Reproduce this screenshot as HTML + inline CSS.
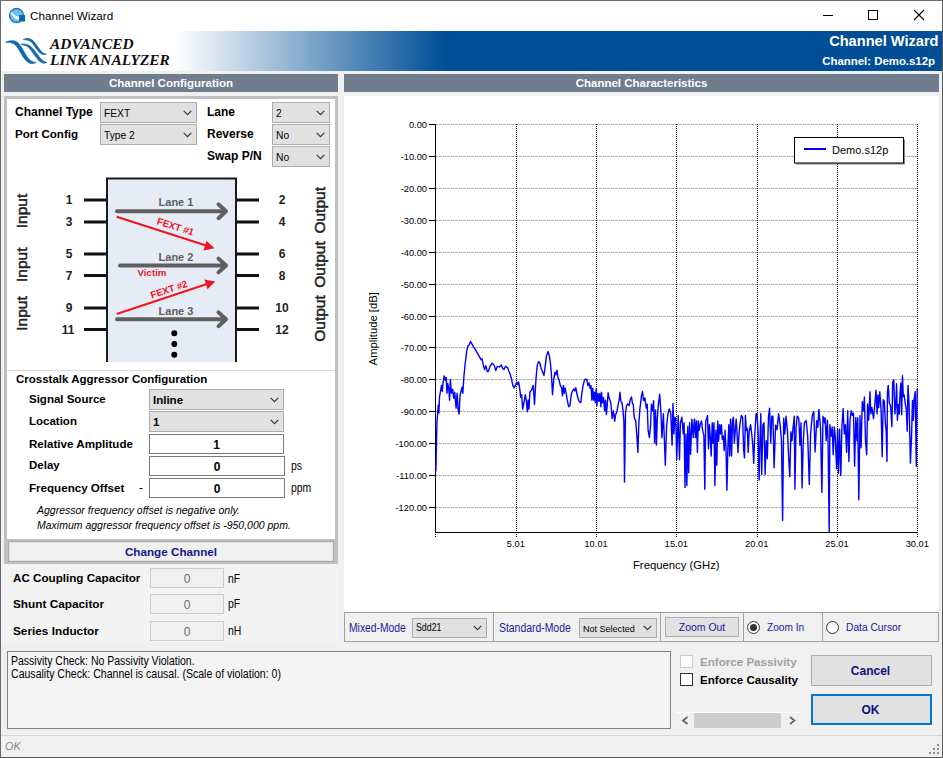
<!DOCTYPE html>
<html><head><meta charset="utf-8">
<style>
*{margin:0;padding:0;box-sizing:border-box}
html,body{width:943px;height:758px;overflow:hidden;background:#f0f0f0;font-family:"Liberation Sans",sans-serif;color:#000}
.a{position:absolute}
.t{position:absolute;white-space:nowrap;line-height:1}
.b{font-weight:bold}
.dd{position:absolute;background:#e1e1e1;border:1px solid #adadad}
.dd .v{position:absolute;left:3px;white-space:nowrap;line-height:1}
.chev2{position:absolute}
.tb{position:absolute;background:#fff;border:1px solid #7a7a7a}
.dis{position:absolute;background:#f0f0f0;border:1px solid #ccc}
.bar{position:absolute;background:#6f7d8c;color:#fff;font-weight:bold;font-size:11.5px;text-align:center;line-height:18px}
</style></head><body>
<!-- window frame -->
<div class="a" style="left:0;top:0;width:943px;height:758px;background:#f0f0f0"></div>
<!-- title bar -->
<div class="a" style="left:0;top:0;width:943px;height:31px;background:#fff"></div>
<div class="a" style="left:0;top:0;width:943px;height:1px;background:#6e6e6e"></div>
<svg class="a" style="left:8px;top:6.8px" width="18" height="18" viewBox="0 0 18 18">
<circle cx="8.5" cy="8.5" r="7" fill="#6cbbe8" stroke="#1a78c2" stroke-width="1.3"/>
<path d="M2.3 4.8 Q4 9 6 10.8 Q8 12.6 11 13 L11 9.6 Q7 9.2 4.5 6.3 Z" fill="#fff"/>
<rect x="11" y="8" width="6" height="6.5" fill="#0a6ab5"/>
</svg>
<div class="t" style="left:30px;top:10px;font-size:11.7px">Channel Wizard</div>
<div class="a" style="left:823px;top:15px;width:10px;height:1px;background:#000"></div>
<div class="a" style="left:868px;top:10px;width:10px;height:10px;border:1px solid #000"></div>
<svg class="a" style="left:913px;top:9px" width="12" height="12" viewBox="0 0 12 12"><path d="M1 1L11 11M11 1L1 11" stroke="#000" stroke-width="1.1"/></svg>

<!-- header banner -->
<div class="a" style="left:1px;top:31px;width:941px;height:40px;background:linear-gradient(to right,#fff 0px,#fff 175px,#004f96 443px,#004f96 941px)"></div>
<svg class="a" style="left:4px;top:36px" width="46" height="30" viewBox="0 0 46 30"><g fill="#1268ae" stroke="#1268ae" stroke-width="0.7" stroke-linejoin="round">
<polygon points="1.56,6.36 4.62,5.09 8.18,4.68 11.23,5.09 13.78,6.62 15.81,8.91 17.85,11.96 19.88,15.52 21.92,19.08 23.95,21.88 26.50,24.43 29.55,26.21 32.10,26.46 29.55,27.48 26.50,27.48 23.45,25.95 20.90,23.41 18.36,19.85 16.32,16.28 14.28,12.72 12.25,9.67 9.70,7.63 6.65,6.62 3.60,6.36"/><polygon points="16.83,8.40 19.88,7.89 22.94,8.40 25.99,9.92 28.53,12.21 31.08,15.27 33.62,18.83 36.17,21.88 38.71,24.43 41.26,25.95 42.78,26.46 40.24,27.23 37.69,26.72 34.64,24.43 32.10,21.37 29.55,17.81 27.01,14.25 24.46,11.20 21.92,9.67 19.37,8.91"/><polygon points="19.37,3.56 22.43,2.29 25.99,2.80 29.04,4.58 31.59,7.63 34.13,11.20 36.68,14.76 39.22,17.05 42.27,18.32 38.71,18.58 35.66,16.79 33.11,13.74 30.57,10.18 28.03,6.62 24.97,4.58 21.92,3.82"/></g></svg>
<div class="t" style="left:50px;top:36px;font-family:'Liberation Serif',serif;font-weight:bold;font-style:italic;font-size:15.4px;color:#111">ADVANCED</div>
<div class="t" style="left:50px;top:51.5px;font-family:'Liberation Serif',serif;font-weight:bold;font-style:italic;font-size:15.4px;color:#111">LINK ANALYZER</div>
<div class="t b" style="right:4.5px;top:33.8px;font-size:14.6px;color:#fff">Channel Wizard</div>
<div class="t b" style="right:8px;top:55.5px;font-size:11.4px;color:#fff">Channel: Demo.s12p</div>

<!-- section bars -->
<div class="bar" style="left:4px;top:74px;width:334px;height:18px">Channel Configuration</div>
<div class="bar" style="left:344px;top:74px;width:595px;height:18px">Channel Characteristics</div>

<!-- left frame -->
<div class="a" style="left:4px;top:96px;width:334px;height:468px;background:#c0c0c0"></div>
<div class="a" style="left:7px;top:99px;width:328px;height:440px;background:#fff"></div>


<!-- top combos -->
<div class="t b" style="left:15px;top:106px;font-size:12px">Channel Type</div>
<div class="t b" style="left:15px;top:128.3px;font-size:11.6px">Port Config</div>
<div class="t b" style="left:207px;top:106px;font-size:12px">Lane</div>
<div class="t b" style="left:207px;top:128px;font-size:12px">Reverse</div>
<div class="t b" style="left:207px;top:150px;font-size:12px">Swap P/N</div>
<div class="dd" style="left:100px;top:102px;width:97px;height:21px"><span class="v" style="top:4.8px;font-size:11.5px;transform:scaleX(0.89);transform-origin:0 0;">FEXT</span><svg class="chev2" style="right:4px;top:7px" width="9" height="6" viewBox="0 0 9 6"><path d="M0.7 0.8L4.5 4.6L8.3 0.8" stroke="#333" stroke-width="1.15" fill="none"/></svg></div>
<div class="dd" style="left:100px;top:124px;width:97px;height:21px"><span class="v" style="top:4.8px;font-size:11.5px;transform:scaleX(0.89);transform-origin:0 0;">Type 2</span><svg class="chev2" style="right:4px;top:7px" width="9" height="6" viewBox="0 0 9 6"><path d="M0.7 0.8L4.5 4.6L8.3 0.8" stroke="#333" stroke-width="1.15" fill="none"/></svg></div>
<div class="dd" style="left:272px;top:102px;width:58px;height:21px"><span class="v" style="top:4.8px;font-size:11.5px;transform:scaleX(0.89);transform-origin:0 0;">2</span><svg class="chev2" style="right:4px;top:7px" width="9" height="6" viewBox="0 0 9 6"><path d="M0.7 0.8L4.5 4.6L8.3 0.8" stroke="#333" stroke-width="1.15" fill="none"/></svg></div>
<div class="dd" style="left:272px;top:124px;width:58px;height:21px"><span class="v" style="top:4.8px;font-size:11.5px;transform:scaleX(0.89);transform-origin:0 0;">No</span><svg class="chev2" style="right:4px;top:7px" width="9" height="6" viewBox="0 0 9 6"><path d="M0.7 0.8L4.5 4.6L8.3 0.8" stroke="#333" stroke-width="1.15" fill="none"/></svg></div>
<div class="dd" style="left:272px;top:146px;width:58px;height:21px"><span class="v" style="top:4.8px;font-size:11.5px;transform:scaleX(0.89);transform-origin:0 0;">No</span><svg class="chev2" style="right:4px;top:7px" width="9" height="6" viewBox="0 0 9 6"><path d="M0.7 0.8L4.5 4.6L8.3 0.8" stroke="#333" stroke-width="1.15" fill="none"/></svg></div>

<!-- diagram -->
<svg class="a" style="left:7px;top:99px" width="328" height="440" viewBox="7 99 328 440">
<rect x="107" y="178.5" width="129" height="190" fill="#e6ecf6" stroke="#1a1a1a" stroke-width="2"/>
<rect x="100" y="362" width="150" height="20" fill="#fff"/>
<g stroke="#111" stroke-width="3">
<path d="M84 200H106M84 222H106M84 254H106M84 275.5H106M84 308H106M84 329.5H106"/>
<path d="M237 200H259M237 222H259M237 254H259M237 275.5H259M237 308H259M237 329.5H259"/>
</g>
<g fill="#222" font-family="Liberation Sans" font-weight="bold" font-size="12" text-anchor="middle">
<text x="69" y="204">1</text><text x="69" y="226">3</text><text x="69" y="258">5</text><text x="69" y="279.5">7</text><text x="69" y="312">9</text><text x="68" y="333.5">11</text>
<text x="282" y="204">2</text><text x="282" y="226">4</text><text x="282" y="258">6</text><text x="282" y="279.5">8</text><text x="282" y="312">10</text><text x="282" y="333.5">12</text>
</g>
<g fill="#222" stroke="#222" stroke-width="0.5" font-family="Liberation Sans" font-size="15.5" text-anchor="middle">
<text transform="translate(27,211) rotate(-90)">Input</text>
<text transform="translate(27,264.7) rotate(-90)">Input</text>
<text transform="translate(27,313.5) rotate(-90)">Input</text>
<text transform="translate(325,210.3) rotate(-90)">Output</text>
<text transform="translate(325,264.5) rotate(-90)">Output</text>
<text transform="translate(325,318.5) rotate(-90)">Output</text>
</g>
<g stroke="#5f5f5f" stroke-width="4" stroke-linecap="round" stroke-linejoin="round" fill="none">
<path d="M117 211.3H226M218.5 204.4L226 211.3L218.5 218.2"/>
<path d="M120 265.5H226M218.5 258.6L226 265.5L218.5 272.4"/>
<path d="M117 319.3H226M218.5 312.4L226 319.3L218.5 326.2"/>
</g>
<g fill="#5f5f5f" font-family="Liberation Sans" font-weight="bold" font-size="11" text-anchor="middle">
<text x="176" y="206">Lane 1</text><text x="176" y="261">Lane 2</text><text x="176" y="315">Lane 3</text>
</g>
<g stroke="#f0141e" stroke-width="2" fill="none">
<path d="M116.7 216.7L206 245.5"/>
<path d="M116.7 314L207 284"/>
</g>
<path d="M214.5 248.2L203.5 250.5L206.5 240.8Z" fill="#f0141e"/>
<path d="M215.3 281.5L207.5 289.2L204.5 279.5Z" fill="#f0141e"/>
<g fill="#f0141e" font-family="Liberation Sans" font-weight="bold" font-size="9.7" text-anchor="middle">
<text transform="translate(174.5,229.8) rotate(18)">FEXT #1</text>
<text transform="translate(170,292.6) rotate(-18)">FEXT #2</text>
<text x="152" y="276">Victim</text>
</g>
<g fill="#000"><circle cx="174.3" cy="333.2" r="3"/><circle cx="174.3" cy="344" r="3"/><circle cx="174.3" cy="354.8" r="3"/></g>
</svg>
<div class="a" style="left:7px;top:370px;width:328px;height:1px;background:#dadada"></div>

<!-- crosstalk -->
<div class="t b" style="left:16px;top:374px;font-size:11.5px">Crosstalk Aggressor Configuration</div>
<div class="t b" style="left:29px;top:394px;font-size:11.5px">Signal Source</div>
<div class="t b" style="left:29px;top:416px;font-size:11.5px">Location</div>
<div class="t b" style="left:29px;top:437.8px;font-size:11.6px">Relative Amplitude</div>
<div class="t b" style="left:29px;top:460px;font-size:11.5px">Delay</div>
<div class="t b" style="left:29px;top:481.6px;font-size:11.6px">Frequency Offset</div>
<div class="t" style="left:139px;top:482px;font-size:12px">-</div>
<div class="dd" style="left:149px;top:389px;width:135px;height:21px"><span class="v b" style="top:5px;font-size:11.5px">Inline</span><svg class="chev2" style="right:4px;top:7px" width="9" height="6" viewBox="0 0 9 6"><path d="M0.7 0.8L4.5 4.6L8.3 0.8" stroke="#333" stroke-width="1.15" fill="none"/></svg></div>
<div class="dd" style="left:149px;top:411px;width:135px;height:21px"><span class="v b" style="top:5px;font-size:11.5px">1</span><svg class="chev2" style="right:4px;top:7px" width="9" height="6" viewBox="0 0 9 6"><path d="M0.7 0.8L4.5 4.6L8.3 0.8" stroke="#333" stroke-width="1.15" fill="none"/></svg></div>
<div class="tb" style="left:149px;top:434px;width:135px;height:20px"><span class="t b" style="left:0;width:133px;text-align:center;top:4px;font-size:12px">1</span></div>
<div class="tb" style="left:149px;top:456px;width:136px;height:20px"><span class="t b" style="left:0;width:134px;text-align:center;top:4px;font-size:12px">0</span></div>
<div class="tb" style="left:149px;top:478px;width:136px;height:20px"><span class="t b" style="left:0;width:134px;text-align:center;top:4px;font-size:12px">0</span></div>
<div class="t" style="left:291px;top:460px;font-size:12px;transform:scaleX(0.87);transform-origin:0 0;">ps</div>
<div class="t" style="left:291px;top:482px;font-size:12px;transform:scaleX(0.87);transform-origin:0 0;">ppm</div>
<div class="t" style="left:37px;top:505px;font-size:10.5px;font-style:italic">Aggressor frequency offset is negative only.</div>
<div class="t" style="left:37px;top:520px;font-size:10.5px;font-style:italic">Maximum aggressor frequency offset is -950,000 ppm.</div>

<!-- change channel -->
<div class="a" style="left:8px;top:541px;width:326px;height:21px;background:#f0f0f0;border:1px solid #a8a8a8;box-shadow:inset 0 0 0 1px #e3e3e3"></div>
<div class="t" style="left:8px;width:326px;text-align:center;top:545.5px;font-size:11.7px;color:#1a1a8c;font-weight:bold">Change Channel</div>

<!-- passive components -->
<div class="a" style="left:1px;top:564px;width:337px;height:78px;background:#f3f3f3"></div>
<div class="t b" style="left:13px;top:571.6px;font-size:11.65px">AC Coupling Capacitor</div>
<div class="t b" style="left:13px;top:599px;font-size:11.8px">Shunt Capacitor</div>
<div class="t b" style="left:13px;top:626px;font-size:11.8px">Series Inductor</div>
<div class="dis" style="left:150px;top:568px;width:74px;height:20px"><span class="t" style="left:0;width:72px;text-align:center;top:4px;font-size:12px;color:#6d6d6d">0</span></div>
<div class="dis" style="left:150px;top:594px;width:74px;height:20px"><span class="t" style="left:0;width:72px;text-align:center;top:4px;font-size:12px;color:#6d6d6d">0</span></div>
<div class="dis" style="left:150px;top:621px;width:74px;height:20px"><span class="t" style="left:0;width:72px;text-align:center;top:4px;font-size:12px;color:#6d6d6d">0</span></div>
<div class="t" style="left:228px;top:572.5px;font-size:12px;transform:scaleX(0.87);transform-origin:0 0;">nF</div>
<div class="t" style="left:228px;top:598px;font-size:12px;transform:scaleX(0.87);transform-origin:0 0;">pF</div>
<div class="t" style="left:228px;top:625px;font-size:12px;transform:scaleX(0.87);transform-origin:0 0;">nH</div>

<!-- right chart area -->
<div class="a" style="left:344px;top:96px;width:595px;height:516px;background:#fff"></div>
<svg class="a" style="left:344px;top:96px" width="595" height="516" viewBox="344 96 595 516">
<path d="M435 124.5H918 M435 156.5H918 M435 188.5H918 M435 220.5H918 M435 252.5H918 M435 284.5H918 M435 316.5H918 M435 347.5H918 M435 379.5H918 M435 411.5H918 M435 443.5H918 M435 475.5H918 M435 507.5H918" stroke="#a9a9a9" stroke-width="1" stroke-dasharray="3 1" fill="none"/>
<path d="M516.5 124V537 M596.5 124V537 M676.5 124V537 M757.5 124V537 M837.5 124V537 M917.5 124V537" stroke="#000" stroke-width="1" stroke-dasharray="1 1" fill="none"/>
<path d="M435.5 537V533" stroke="#000" stroke-width="1" stroke-dasharray="1 1" fill="none"/>
<path d="M435.5 124V533M435 532.5H918" stroke="#000" stroke-width="1" fill="none"/>
<path d="M429 124.5H435 M429 156.5H435 M429 188.5H435 M429 220.5H435 M429 252.5H435 M429 284.5H435 M429 316.5H435 M429 347.5H435 M429 379.5H435 M429 411.5H435 M429 443.5H435 M429 475.5H435 M429 507.5H435" stroke="#000" stroke-width="1" fill="none"/>
<g font-family="Liberation Sans" font-size="9.3" text-anchor="end" fill="#000"><text x="427" y="127.5">0.00</text><text x="427" y="159.5">-10.00</text><text x="427" y="191.5">-20.00</text><text x="427" y="223.5">-30.00</text><text x="427" y="255.5">-40.00</text><text x="427" y="287.5">-50.00</text><text x="427" y="319.5">-60.00</text><text x="427" y="350.5">-70.00</text><text x="427" y="382.5">-80.00</text><text x="427" y="414.5">-90.00</text><text x="427" y="446.5">-100.00</text><text x="427" y="478.5">-110.00</text><text x="427" y="510.5">-120.00</text></g>
<g font-family="Liberation Sans" font-size="9.3" text-anchor="middle" fill="#000"><text x="515.8" y="547">5.01</text><text x="596.1" y="547">10.01</text><text x="676.4" y="547">15.01</text><text x="756.7" y="547">20.01</text><text x="837.0" y="547">25.01</text><text x="917.3" y="547">30.01</text></g>
<text transform="translate(377.3,328.8) rotate(-90)" font-family="Liberation Sans" font-size="11.25" text-anchor="middle">Amplitude [dB]</text>
<text x="676.3" y="569.2" font-family="Liberation Sans" font-size="11.3" text-anchor="middle">Frequency (GHz)</text>
<!--CURVE--><path d="M435.9 471.4 L436.9 423.0 L438.3 405.0 L438.9 413.0 L439.5 397.0 L440.9 389.0 L441.5 385.4 L442.3 391.3 L443.0 383.4 L444.2 375.9 L445.4 380.4 L446.2 377.5 L447.0 393.3 L447.8 383.4 L448.8 389.3 L449.6 400.2 L450.4 379.4 L451.4 393.3 L452.7 389.3 L453.7 398.2 L454.7 392.3 L456.1 408.1 L457.1 393.3 L458.1 409.1 L459.1 414.0 L460.1 395.3 L461.0 391.3 L462.0 387.3 L462.8 393.3 L464.0 375.5 L465.2 363.6 L466.6 351.8 L468.0 345.8 L469.2 344.8 L470.5 341.5 L471.9 343.8 L473.5 346.8 L475.5 349.8 L477.5 353.3 L479.4 356.7 L481.0 359.7 L482.0 358.7 L483.4 365.6 L484.6 369.5 L485.8 365.6 L487.3 371.5 L488.3 371.5 L490.3 365.6 L492.3 363.2 L494.3 365.6 L495.8 370.5 L497.2 366.6 L499.2 366.6 L499.6 366.9 L501.3 364.9 L502.6 368.2 L504.0 369.5 L505.5 366.3 L507.5 367.6 L508.8 370.9 L510.2 374.2 L511.5 378.8 L512.8 385.4 L514.1 388.0 L515.4 385.4 L516.8 382.1 L517.7 384.7 L518.7 382.1 L519.8 389.3 L520.7 397.2 L521.6 394.6 L522.7 409.1 L524.0 402.5 L525.3 394.6 L526.4 401.2 L527.3 411.7 L528.2 399.9 L529.0 409.1 L529.9 392.0 L531.3 390.6 L532.3 388.0 L533.2 385.4 L534.5 404.5 L535.9 380.1 L537.2 365.6 L538.5 361.6 L539.8 363.0 L541.1 368.2 L542.7 372.2 L544.0 375.5 L545.1 366.9 L546.4 356.4 L548.0 351.4 L549.3 355.7 L550.4 363.0 L551.4 373.5 L552.5 394.6 L553.7 380.1 L555.0 372.2 L555.9 374.8 L557.0 370.2 L558.0 377.5 L559.1 380.1 L560.3 385.4 L561.6 388.0 L562.5 395.9 L563.3 385.4 L564.2 393.3 L565.0 388.0 L565.9 392.2 L567.3 400.1 L568.6 406.7 L569.9 406.0 L571.2 394.8 L572.5 390.9 L573.8 388.9 L574.8 390.9 L575.8 387.6 L577.1 394.8 L578.5 400.1 L579.8 402.1 L580.8 402.7 L581.8 393.5 L583.1 385.6 L584.4 380.3 L585.7 379.0 L587.0 380.3 L587.9 385.6 L589.0 383.0 L590.1 388.2 L591.0 385.6 L591.9 400.1 L592.7 388.2 L593.6 400.1 L594.5 392.2 L595.3 402.7 L596.3 388.2 L596.9 405.4 L598.0 393.5 L598.9 401.4 L599.8 393.5 L600.9 406.7 L601.5 392.2 L602.4 402.7 L603.5 397.5 L604.6 410.6 L605.5 400.1 L606.4 414.6 L607.2 405.4 L608.1 392.8 L609.4 398.8 L610.8 402.7 L612.1 418.5 L613.4 410.6 L614.7 421.2 L615.6 414.6 L616.9 412.0 L618.0 405.4 L619.1 400.1 L620.0 392.2 L620.9 401.4 L622.0 402.7 L623.0 410.6 L623.9 421.2 L624.5 482.0 L625.5 413.3 L626.6 405.4 L627.9 404.0 L629.2 405.4 L630.2 399.7 L631.5 397.0 L632.4 403.4 L633.3 404.3 L634.2 417.3 L635.7 421.0 L637.0 437.6 L637.9 452.4 L638.9 422.8 L639.8 409.9 L641.3 397.0 L642.5 391.4 L643.5 400.6 L644.9 397.9 L646.2 408.0 L647.2 404.3 L648.1 430.2 L649.4 437.6 L650.5 426.5 L651.4 404.3 L652.7 410.8 L653.6 400.6 L654.6 443.1 L655.5 409.9 L656.4 445.0 L657.3 419.1 L658.2 406.2 L659.7 394.2 L661.0 413.6 L661.9 437.6 L663.4 413.6 L664.2 435.7 L665.3 465.3 L666.6 426.5 L667.9 413.6 L669.3 409.0 L670.8 413.6 L672.1 445.0 L673.0 403.4 L673.9 433.9 L674.9 417.3 L675.8 419.1 L676.7 459.7 L678.2 415.4 L679.5 459.7 L680.4 422.8 L681.9 417.3 L683.2 433.9 L684.1 422.8 L685.0 487.4 L686.0 433.9 L686.9 485.6 L687.8 426.5 L688.7 472.7 L689.6 422.8 L690.6 454.2 L691.9 419.1 L693.3 437.6 L694.3 419.1 L694.6 419.1 L695.5 437.6 L696.5 421.0 L697.4 452.4 L698.3 421.0 L699.2 430.2 L700.2 424.6 L701.5 421.0 L702.6 430.2 L703.9 435.7 L704.8 489.3 L705.7 421.0 L706.6 419.1 L707.5 415.4 L708.5 448.7 L709.4 424.6 L710.3 437.6 L711.2 456.0 L712.2 422.8 L713.1 443.1 L714.0 422.8 L714.9 485.6 L715.9 430.2 L716.8 465.3 L717.7 421.0 L718.6 441.3 L719.6 424.6 L720.5 433.9 L721.4 424.6 L722.3 439.4 L723.2 435.7 L724.2 450.5 L725.1 430.2 L726.0 448.7 L726.9 490.2 L727.9 446.8 L728.8 424.6 L729.7 456.0 L730.6 419.1 L731.6 456.0 L732.5 421.0 L733.4 417.3 L734.3 443.1 L735.3 430.2 L736.2 419.1 L737.1 433.9 L738.0 452.4 L739.0 433.9 L739.9 424.6 L741.3 415.4 L742.6 417.3 L743.6 448.7 L744.5 457.9 L745.4 415.4 L746.3 430.2 L747.3 428.3 L748.2 452.4 L749.1 432.0 L750.6 424.6 L751.9 435.7 L752.8 445.0 L753.7 463.4 L754.6 437.6 L756.1 413.6 L757.0 413.6 L758.0 430.2 L759.1 480.0 L760.0 439.4 L760.8 413.8 L761.7 474.4 L762.9 425.1 L764.0 422.8 L765.1 474.4 L766.2 440.8 L767.3 458.7 L768.5 416.1 L769.6 408.2 L770.7 443.0 L771.8 416.1 L772.9 416.1 L774.1 467.7 L775.6 425.1 L777.0 429.6 L778.6 413.8 L780.1 425.1 L781.5 440.8 L782.6 520.4 L783.7 418.3 L784.8 434.0 L786.0 416.1 L787.5 431.8 L788.7 458.7 L789.8 476.7 L790.9 431.8 L792.0 440.8 L793.1 427.3 L794.3 416.1 L794.9 489.0 L796.1 427.3 L797.2 416.1 L798.8 418.3 L799.9 445.3 L801.0 422.8 L802.1 487.9 L803.2 443.0 L804.4 422.8 L806.2 420.6 L807.7 436.3 L809.3 484.5 L810.6 434.0 L812.2 416.1 L813.8 411.6 L815.1 452.0 L816.7 420.6 L817.8 427.3 L818.9 409.4 L820.5 427.3 L821.9 492.4 L823.0 416.1 L824.6 422.8 L825.1 417.8 L826.2 440.8 L827.4 420.1 L828.1 443.2 L829.2 532.1 L829.9 424.7 L831.1 436.2 L832.2 427.0 L833.2 454.7 L834.3 427.0 L835.2 436.2 L836.6 468.6 L837.6 429.3 L838.5 473.2 L839.6 429.3 L840.8 475.5 L841.9 427.0 L843.1 408.5 L844.3 433.9 L845.4 424.7 L846.6 452.4 L847.7 410.8 L848.9 461.6 L850.0 420.1 L851.2 410.8 L852.3 415.4 L853.5 413.1 L854.6 466.3 L855.8 417.8 L857.0 440.8 L857.7 417.8 L858.8 499.8 L860.0 415.4 L861.1 447.8 L862.3 401.6 L863.4 410.8 L864.4 397.0 L865.5 440.8 L866.7 454.7 L867.6 403.9 L868.7 420.1 L870.0 391.7 L870.8 413.9 L871.9 407.5 L873.5 418.6 L874.8 404.4 L876.0 390.1 L877.1 413.9 L877.9 394.9 L878.7 407.5 L879.8 391.7 L881.1 410.7 L882.2 456.7 L883.2 399.6 L884.3 401.2 L885.4 423.4 L886.2 431.3 L887.0 461.4 L887.4 393.3 L888.2 385.4 L889.3 402.8 L890.6 406.0 L891.9 426.6 L892.7 382.2 L893.8 379.8 L894.9 413.9 L895.8 404.4 L896.6 383.8 L897.4 420.2 L898.5 404.4 L899.3 413.9 L900.1 391.7 L900.9 383.0 L901.7 414.7 L902.5 375.8 L903.3 396.5 L904.1 394.9 L905.2 402.8 L906.4 410.7 L907.2 431.3 L908.0 385.4 L909.1 404.4 L910.4 463.0 L911.5 437.7 L912.5 400.4 L913.3 420.2 L914.1 399.6 L915.2 391.7 L916.3 466.2 L917.2 388.5" stroke="#0000ff" stroke-width="1.4" fill="none" stroke-linejoin="round"/><!--/CURVE-->
<rect x="796" y="139.5" width="109" height="25" fill="#888"/>
<rect x="794.5" y="137.5" width="109" height="25.5" fill="#fff" stroke="#000" stroke-width="1"/>
<path d="M804 149H826" stroke="#0000ff" stroke-width="2"/>
<text x="832" y="153.7" font-family="Liberation Sans" font-size="11">Demo.s12p</text>
</svg>

<!-- toolbar -->
<div class="a" style="left:344px;top:612px;width:595px;height:30px;background:#f0f0f0;border:1px solid #a0a0a0"></div>
<div class="t" style="left:348.5px;top:622px;font-size:12px;color:#1a1a9a;transform:scaleX(0.86);transform-origin:0 0;">Mixed-Mode</div>
<div class="dd" style="left:412px;top:618px;width:75px;height:20px"><span class="v" style="top:4px;font-size:10px;transform:scaleX(0.88);transform-origin:0 0;">Sdd21</span><svg class="chev2" style="right:4px;top:6px" width="9" height="6" viewBox="0 0 9 6"><path d="M0.7 0.8L4.5 4.6L8.3 0.8" stroke="#333" stroke-width="1.15" fill="none"/></svg></div>
<div class="a" style="left:493px;top:613px;width:1px;height:28px;background:#a0a0a0"></div>
<div class="t" style="left:498.5px;top:622px;font-size:12px;color:#1a1a9a;transform:scaleX(0.867);transform-origin:0 0;">Standard-Mode</div>
<div class="dd" style="left:579px;top:618px;width:78px;height:20px"><span class="v" style="top:5px;font-size:9.5px;transform:scaleX(0.95);transform-origin:0 0;">Not Selected</span><svg class="chev2" style="right:4px;top:6px" width="9" height="6" viewBox="0 0 9 6"><path d="M0.7 0.8L4.5 4.6L8.3 0.8" stroke="#333" stroke-width="1.15" fill="none"/></svg></div>
<div class="a" style="left:660px;top:613px;width:1px;height:28px;background:#a0a0a0"></div>
<div class="a" style="left:665px;top:617px;width:74px;height:20px;background:#e1e1e1;border:1px solid #adadad"></div>
<div class="t" style="left:665px;width:74px;text-align:center;top:621.7px;font-size:11px;color:#1a1a9a;transform:scaleX(0.95)">Zoom Out</div>
<div class="a" style="left:743px;top:613px;width:1px;height:28px;background:#a0a0a0"></div>
<div class="a" style="left:747px;top:621px;width:13px;height:13px;border-radius:50%;border:1px solid #333;background:#fff"></div>
<div class="a" style="left:750px;top:624px;width:7px;height:7px;border-radius:50%;background:#333"></div>
<div class="t" style="left:766.5px;top:621.7px;font-size:11px;color:#1a1a9a;transform:scaleX(0.92);transform-origin:0 0;">Zoom In</div>
<div class="a" style="left:822px;top:613px;width:1px;height:28px;background:#a0a0a0"></div>
<div class="a" style="left:826px;top:621px;width:13px;height:13px;border-radius:50%;border:1px solid #333;background:#fff"></div>
<div class="t" style="left:846px;top:621.7px;font-size:11px;color:#1a1a9a;transform:scaleX(0.93);transform-origin:0 0;">Data Cursor</div>

<!-- messages -->
<div class="a" style="left:7px;top:651px;width:664px;height:78px;background:#f4f4f4;border:1px solid #828282"></div>
<div class="t" style="left:10.5px;top:655.3px;font-size:12px;transform:scaleX(0.875);transform-origin:0 0;">Passivity Check: No Passivity Violation.</div>
<div class="t" style="left:10.5px;top:668.4px;font-size:12px;transform:scaleX(0.88);transform-origin:0 0;">Causality Check: Channel is causal. (Scale of violation: 0)</div>

<!-- checkboxes -->
<div class="a" style="left:680px;top:655px;width:13px;height:13px;border:1px solid #cccccc;background:#fff"></div>
<div class="t b" style="left:700px;top:656px;font-size:11.6px;color:#a0a0a0">Enforce Passivity</div>
<div class="a" style="left:680px;top:673px;width:13px;height:13px;border:1px solid #333;background:#fff"></div>
<div class="t b" style="left:700px;top:674px;font-size:11.6px">Enforce Causality</div>
<div class="a" style="left:677px;top:712px;width:124px;height:1px;background:#fff"></div>
<div class="a" style="left:694px;top:713px;width:87px;height:15px;background:#cdcdcd"></div>
<svg class="a" style="left:680px;top:714px" width="120" height="13" viewBox="0 0 120 13"><path d="M7.5 3L3 6.5L7.5 10M110 3L114.5 6.5L110 10" stroke="#606060" stroke-width="1.6" fill="none"/></svg>

<!-- buttons -->
<div class="a" style="left:811px;top:655px;width:121px;height:31px;background:#e1e1e1;border:1px solid #adadad"></div>
<div class="t b" style="left:810px;width:121px;text-align:center;top:665px;font-size:12px;color:#10107a">Cancel</div>
<div class="a" style="left:811px;top:694px;width:121px;height:31px;background:#e1e1e1;border:2px solid #0078d7"></div>
<div class="t b" style="left:810px;width:121px;text-align:center;top:704px;font-size:12px;color:#10107a">OK</div>

<!-- status bar -->
<div class="a" style="left:1px;top:735px;width:941px;height:1px;background:#d7d7d7"></div>
<div class="t" style="left:5px;top:741px;font-size:11px;font-style:italic;color:#8a8a8a">OK</div>
<svg class="a" style="left:928px;top:743px" width="12" height="12" viewBox="0 0 12 12"><g fill="#8a8a8a"><rect x="9" y="1" width="2" height="2"/><rect x="5" y="5" width="2" height="2"/><rect x="9" y="5" width="2" height="2"/><rect x="1" y="9" width="2" height="2"/><rect x="5" y="9" width="2" height="2"/><rect x="9" y="9" width="2" height="2"/></g></svg>

<!-- window borders -->
<div class="a" style="left:0;top:0;width:1px;height:758px;background:#6a6a6a"></div>
<div class="a" style="left:942px;top:0;width:1px;height:758px;background:#5a5a5a"></div>
<div class="a" style="left:0;top:757px;width:943px;height:1px;background:#5a5a5a"></div>


</body></html>
